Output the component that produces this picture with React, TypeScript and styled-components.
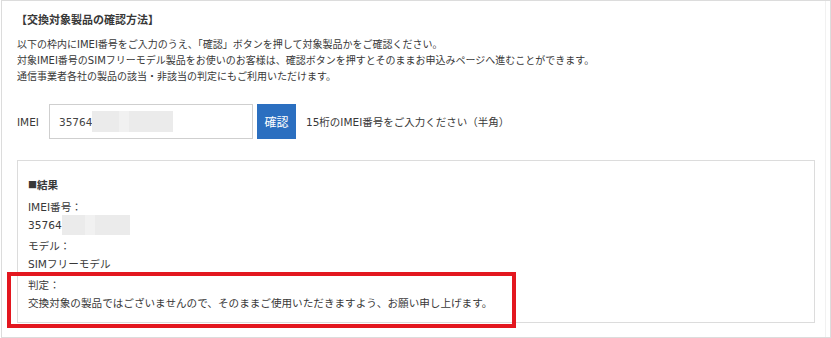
import React from "react";
import styled, { createGlobalStyle } from "styled-components";

const GlobalStyle = createGlobalStyle`
  html, body { margin: 0; padding: 0; background: #fff; }
  * { box-sizing: border-box; }
`;

const FONT = `"DejaVu Sans", "Noto Sans CJK JP", sans-serif`;

const Frame = styled.div`
  position: relative;
  margin-left: 1px;
  width: 830px;
  height: 338px;
  border: 1px solid #dcdcdc;
  box-shadow: inset -4px 0 0 #fff, inset -5px 0 0 #f1f1f1;
  padding: 9px 15px 0 15px;
  font-family: ${FONT};
  color: #383838;
`;

const Title = styled.h2`
  margin: 0;
  font-family: "Noto Sans CJK JP", sans-serif;
  font-size: 11px;
  font-weight: 700;
  line-height: 18px;
  margin-left: -1px;
`;

const Intro = styled.p`
  margin: 9px 0 0;
  font-size: 10px;
  line-height: 16px;
`;

const ImeiRow = styled.div`
  display: flex;
  align-items: center;
  margin-top: 19px;
  height: 35px;
  font-size: 10.5px;
`;

const RowLabel = styled.span`
  width: 32px;
`;

const InputBox = styled.div`
  display: flex;
  align-items: center;
  width: 204px;
  height: 35px;
  border: 1px solid #cfcfcf;
  padding-left: 9px;
  font-size: 10.5px;
  color: #444;
`;

const Redacted = styled.span<{ $w: number; $h: number; $split: number }>`
  display: inline-block;
  width: ${(p) => p.$w}px;
  height: ${(p) => p.$h}px;
  vertical-align: middle;
  background: linear-gradient(
    to right,
    #ebebeb 0,
    #ebebeb ${(p) => p.$split}px,
    #f1f1f1 ${(p) => p.$split}px,
    #f1f1f1 ${(p) => p.$split + 10}px,
    #ebebeb ${(p) => p.$split + 10}px
  );
`;

const ConfirmButton = styled.button`
  margin-left: 4px;
  width: 39px;
  height: 35px;
  border: none;
  background: #2b6fc0;
  color: #fff;
  font-family: "Noto Sans CJK JP", sans-serif;
  font-size: 12px;
  padding: 0;
`;

const Hint = styled.span`
  margin-left: 10px;
`;

const ResultBox = styled.div`
  margin-top: 21px;
  height: 163px;
  border: 1px solid #dcdcdc;
  padding: 15px 10px 9px;
  font-size: 10.6px;
`;

const ResultHeading = styled.div`
  font-family: "Noto Sans CJK JP", sans-serif;
  font-weight: 700;
  line-height: 18px;
  margin-bottom: 4px;
`;

const Square = styled.span`
  font-size: 9px;
  vertical-align: 1px;
`;

const Field = styled.div`
  line-height: 18px;
  & + & {
    margin-top: 3px;
  }
`;

const FieldValue = styled.div`
  display: flex;
  align-items: center;
  height: 18px;
`;

const Annotation = styled.div`
  position: absolute;
  left: 5px;
  top: 271px;
  width: 509px;
  height: 56px;
  border: 4px solid #e3171f;
  pointer-events: none;
`;

export default function App() {
  return (
    <>
      <GlobalStyle />
      <Frame>
        <Title>【交換対象製品の確認方法】</Title>
        <Intro>
          以下の枠内にIMEI番号をご入力のうえ、「確認」ボタンを押して対象製品かをご確認ください。
          <br />
          対象IMEI番号のSIMフリーモデル製品をお使いのお客様は、確認ボタンを押すとそのままお申込みページへ進むことができます。
          <br />
          通信事業者各社の製品の該当・非該当の判定にもご利用いただけます。
        </Intro>
        <ImeiRow>
          <RowLabel>IMEI</RowLabel>
          <InputBox>
            35764
            <Redacted $w={81} $h={21} $split={27} />
          </InputBox>
          <ConfirmButton>確認</ConfirmButton>
          <Hint>15桁のIMEI番号をご入力ください（半角）</Hint>
        </ImeiRow>
        <ResultBox>
          <ResultHeading>
            <Square>■</Square>結果
          </ResultHeading>
          <Field>
            <div>IMEI番号：</div>
            <FieldValue>
              35764
              <Redacted $w={68} $h={20} $split={23} />
            </FieldValue>
          </Field>
          <Field>
            <div>モデル：</div>
            <div>SIMフリーモデル</div>
          </Field>
          <Field>
            <div>判定：</div>
            <div>
              交換対象の製品ではございませんので、そのままご使用いただきますよう、お願い申し上げます。
            </div>
          </Field>
        </ResultBox>
        <Annotation />
      </Frame>
    </>
  );
}
